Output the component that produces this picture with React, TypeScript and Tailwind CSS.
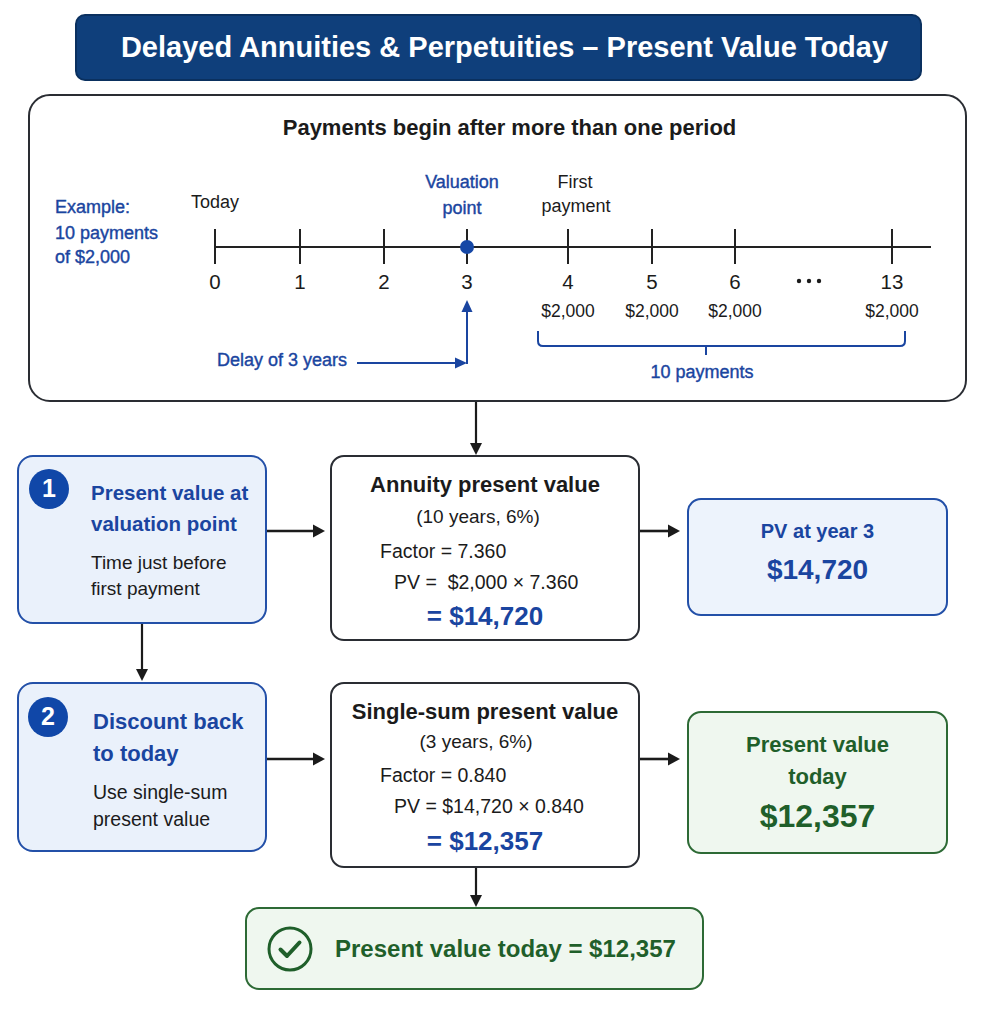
import React from 'react'

const BLUE = '#1a45a0'
const INK = '#1b1b1b'

// little arrow helpers for the flow chart
const DownArrow = ({ height }: { height: number }) => (
  <svg width="14" height={height} viewBox={`0 0 14 ${height}`} className="block">
    <line x1="7" y1="0" x2="7" y2={height - 10} stroke={INK} strokeWidth="2.2" />
    <polygon points={`1,${height - 12} 13,${height - 12} 7,${height}`} fill={INK} />
  </svg>
)

const RightArrow = ({ width }: { width: number }) => (
  <svg width={width} height="14" viewBox={`0 0 ${width} 14`} className="block">
    <line x1="0" y1="7" x2={width - 10} y2="7" stroke={INK} strokeWidth="2.6" />
    <polygon points={`${width - 12},0.5 ${width - 12},13.5 ${width},7`} fill={INK} />
  </svg>
)

const StepBadge = ({ n }: { n: number }) => (
  <div className="w-10 h-10 rounded-full bg-[#1047a8] flex items-center justify-center text-white text-[25px] font-bold shrink-0">
    {n}
  </div>
)

const Timeline = () => {
  const ticks = [215, 300, 384, 467, 568, 652, 735, 892]
  const labels = ['0', '1', '2', '3', '4', '5', '6', '13']
  const blueText = { fill: BLUE, stroke: BLUE, strokeWidth: 0.4 }
  return (
    <svg width="935" height="242" viewBox="30 158 935 242" className="block">
      <g fontSize="18" dominantBaseline="central">
        <text x="55" y="207" {...blueText}>Example:</text>
        <text x="55" y="233" {...blueText}>10 payments</text>
        <text x="55" y="257" {...blueText}>of $2,000</text>

        <text x="215" y="202" textAnchor="middle" fill={INK}>Today</text>
        <text x="462" y="182" textAnchor="middle" {...blueText}>Valuation</text>
        <text x="462" y="208" textAnchor="middle" {...blueText}>point</text>
        <text x="575" y="182" textAnchor="middle" fill={INK}>First</text>
        <text x="576" y="206" textAnchor="middle" fill={INK}>payment</text>
      </g>

      <line x1="215" y1="247" x2="931" y2="247" stroke="#222" strokeWidth="2.2" />
      {ticks.map((x) => (
        <line key={x} x1={x} y1="229" x2={x} y2="264" stroke="#222" strokeWidth="2" />
      ))}
      <circle cx="467" cy="247" r="7" fill="#1547a6" />

      <g fontSize="20.5" dominantBaseline="central" textAnchor="middle" fill={INK}>
        {ticks.map((x, i) => (
          <text key={x} x={x} y="281">{labels[i]}</text>
        ))}
      </g>
      <circle cx="799" cy="281" r="2.2" fill={INK} />
      <circle cx="809" cy="281" r="2.2" fill={INK} />
      <circle cx="819" cy="281" r="2.2" fill={INK} />

      <g fontSize="17.5" dominantBaseline="central" textAnchor="middle" fill={INK}>
        {[568, 652, 735, 892].map((x) => (
          <text key={x} x={x} y="311">$2,000</text>
        ))}
      </g>

      {/* delay arrow */}
      <line x1="467" y1="364" x2="467" y2="309" stroke={BLUE} strokeWidth="2" />
      <polygon points="467,300 461.5,312 472.5,312" fill={BLUE} />
      <line x1="357" y1="363" x2="458" y2="363" stroke={BLUE} strokeWidth="2" />
      <polygon points="467,363 455,357.5 455,368.5" fill={BLUE} />
      <text x="217" y="360" fontSize="18" dominantBaseline="central" {...blueText}>Delay of 3 years</text>

      {/* payments bracket */}
      <path
        d="M538 331 V341 Q538 346 543 346 H900 Q905 346 905 341 V331 M706 346 V355"
        fill="none"
        stroke={BLUE}
        strokeWidth="2"
      />
      <text x="702" y="372" fontSize="18" textAnchor="middle" dominantBaseline="central" {...blueText}>
        10 payments
      </text>
    </svg>
  )
}

export default function App() {
  return (
    <div
      className="w-[982px] h-[1009px] bg-white overflow-hidden text-[#1b1b1b]"
      style={{ fontFamily: '"Liberation Sans", Arial, sans-serif' }}
    >
      {/* Title */}
      <div className="pt-[14px] pl-[75px]">
        <div className="w-[847px] h-[67px] rounded-[10px] bg-[#0f3f7b] border-2 border-[#0a305f] flex items-center justify-center pl-[12px] text-white text-[29px] font-bold">
          Delayed Annuities &amp; Perpetuities – Present Value Today
        </div>
      </div>

      {/* Timeline panel */}
      <div className="mt-[13px] ml-[28px] w-[939px] h-[308px] border-2 border-[#2a2d33] rounded-[22px] bg-white">
        <div className="h-[62px] flex items-center justify-center pl-[24px] text-[22px] font-bold">
          Payments begin after more than one period
        </div>
        <Timeline />
      </div>

      <div className="ml-[469px]">
        <DownArrow height={53} />
      </div>

      {/* Flow rows */}
      <div className="flex pl-[17px]">
        {/* step column */}
        <div className="w-[250px] flex flex-col">
          <div className="h-[169px] rounded-[16px] border-2 border-[#2350a8] bg-[#eaf1fb] flex">
            <div className="ml-[10px] mt-[12px]">
              <StepBadge n={1} />
            </div>
            <div className="ml-[22px] pt-[20px]">
              <div className="text-[20.5px] leading-[31px] font-bold text-[#1a45a0]">
                Present value at
                <br />
                valuation point
              </div>
              <div className="mt-[11px] text-[19px] leading-[26px]">
                Time just before
                <br />
                first payment
              </div>
            </div>
          </div>
          <div className="h-[58px] flex justify-center">
            <DownArrow height={57} />
          </div>
          <div className="h-[170px] rounded-[16px] border-2 border-[#2350a8] bg-[#eaf1fb] flex">
            <div className="ml-[9px] mt-[13px]">
              <StepBadge n={2} />
            </div>
            <div className="ml-[25px] pt-[22px]">
              <div className="text-[22px] leading-[32px] font-bold text-[#1a45a0]">
                Discount back
                <br />
                to today
              </div>
              <div className="mt-[9px] text-[19.5px] leading-[27px]">
                Use single-sum
                <br />
                present value
              </div>
            </div>
          </div>
        </div>

        {/* arrows */}
        <div className="w-[63px] flex flex-col">
          <div className="mt-[69px]">
            <RightArrow width={58} />
          </div>
          <div className="mt-[214px]">
            <RightArrow width={58} />
          </div>
        </div>

        {/* calculation column */}
        <div className="w-[310px] flex flex-col">
          <div className="h-[186px] rounded-[14px] border-2 border-[#2a2d33] bg-white pt-[12px]">
            <div className="h-[30px] flex items-center justify-center text-[22px] font-bold">Annuity present value</div>
            <div className="h-[36px] flex items-center justify-center pr-[14px] text-[19px]">(10 years, 6%)</div>
            <div className="h-[34px] flex items-center pl-[48px] text-[19.5px]">Factor = 7.360</div>
            <div className="h-[28px] flex items-center pl-[62px] text-[19.5px] whitespace-pre">PV =  $2,000 × 7.360</div>
            <div className="h-[38px] flex items-center justify-center text-[26px] font-bold text-[#1a45a0]">= $14,720</div>
          </div>
          <div className="mt-[41px] h-[186px] rounded-[14px] border-2 border-[#2a2d33] bg-white pt-[12px]">
            <div className="h-[30px] flex items-center justify-center text-[22px] font-bold">Single-sum present value</div>
            <div className="h-[32px] flex items-center justify-center pr-[18px] text-[19px]">(3 years, 6%)</div>
            <div className="h-[36px] flex items-center pl-[48px] text-[19.5px]">Factor = 0.840</div>
            <div className="h-[26px] flex items-center pl-[62px] text-[19.5px]">PV = $14,720 × 0.840</div>
            <div className="h-[42px] flex items-center justify-center text-[26px] font-bold text-[#1a45a0]">= $12,357</div>
          </div>
        </div>

        {/* arrows */}
        <div className="w-[47px] flex flex-col">
          <div className="mt-[69px]">
            <RightArrow width={40} />
          </div>
          <div className="mt-[214px]">
            <RightArrow width={40} />
          </div>
        </div>

        {/* results column */}
        <div className="w-[261px] flex flex-col">
          <div className="mt-[43px] h-[118px] rounded-[14px] border-2 border-[#2350a8] bg-[#edf3fc] pt-[16px] text-[#1a45a0] font-bold text-center">
            <div className="h-[30px] leading-[30px] text-[20px]">PV at year 3</div>
            <div className="h-[48px] leading-[48px] text-[28px]">$14,720</div>
          </div>
          <div className="mt-[95px] h-[143px] rounded-[14px] border-2 border-[#2d6a35] bg-[#eff7ef] pt-[16px] text-[#1f5f2a] font-bold text-center">
            <div className="h-[32px] leading-[32px] text-[22px]">Present value</div>
            <div className="h-[32px] leading-[32px] text-[22px]">today</div>
            <div className="h-[46px] leading-[46px] text-[32px]">$12,357</div>
          </div>
        </div>
      </div>

      <div className="ml-[469px]">
        <DownArrow height={39} />
      </div>

      {/* Final result */}
      <div className="ml-[245px] w-[459px] h-[83px] rounded-[14px] border-2 border-[#2d6a35] bg-[#eff7ef] flex items-center pl-[20px]">
        <svg width="46" height="46" viewBox="0 0 46 46" className="block shrink-0">
          <circle cx="23" cy="23" r="21" fill="none" stroke="#1f5f2a" strokeWidth="3" />
          <path d="M13.5 23.5 L20 30 L32.5 16.5" fill="none" stroke="#1f5f2a" strokeWidth="4" strokeLinecap="round" strokeLinejoin="round" />
        </svg>
        <div className="ml-[22px] text-[24px] font-bold text-[#1f5f2a]">Present value today = $12,357</div>
      </div>
    </div>
  )
}
